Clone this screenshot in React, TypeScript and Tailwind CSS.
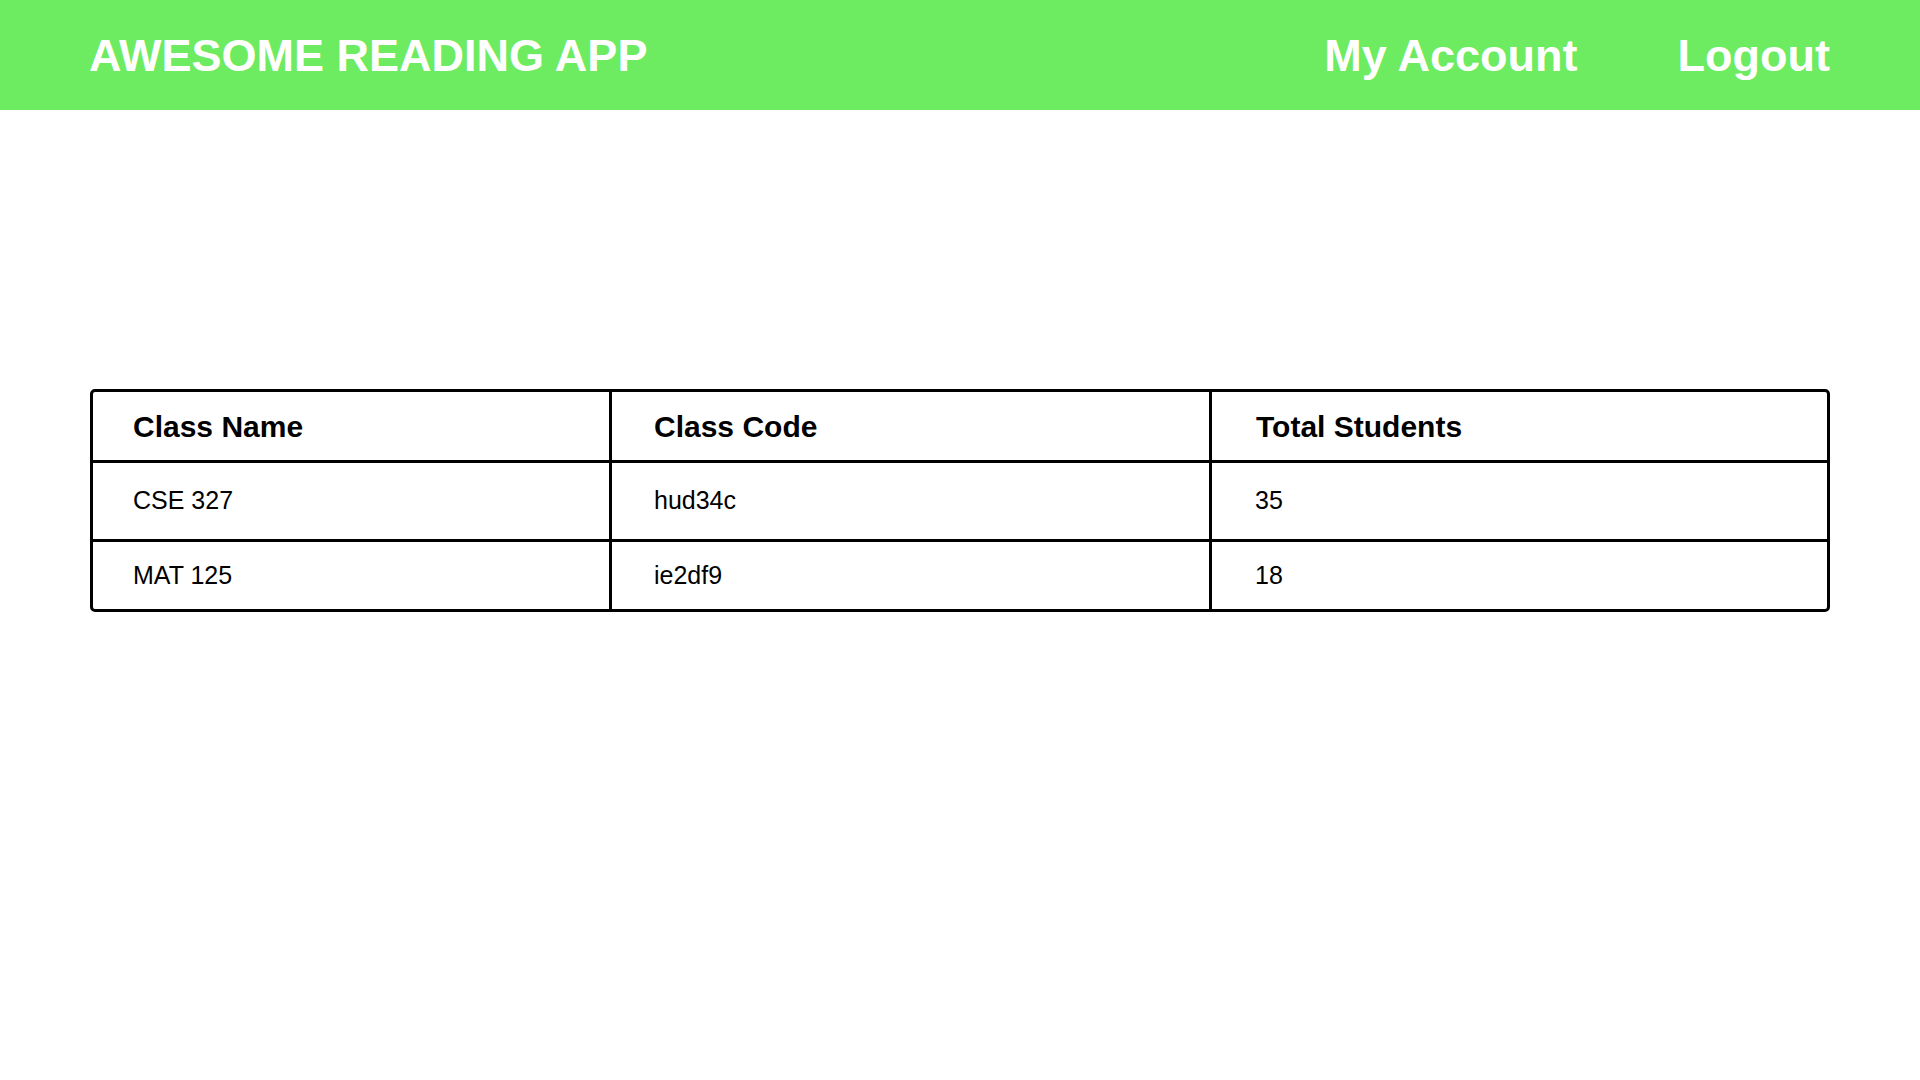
const classes = [
  { name: "CSE 327", code: "hud34c", total: 35, h: "h-[79px]" },
  { name: "MAT 125", code: "ie2df9", total: 18, h: "h-[67px]" },
];

export default function App() {
  return (
    <div className="min-h-screen bg-white font-['Liberation_Sans',Arial,sans-serif] text-black">
      <header className="flex h-[110px] items-center justify-between bg-[#6deb61] pl-[89px] pr-[90px] text-white">
        <h1 className="text-[45px] font-bold leading-none">AWESOME READING APP</h1>
        <nav className="flex items-center gap-[100px] text-[45px] font-bold leading-none">
          <a href="#">My Account</a>
          <a href="#">Logout</a>
        </nav>
      </header>

      <main className="pl-[90px] pr-[90px] pt-[279px]">
        <div className="rounded-[5px] border-[3px] border-black">
          <div className="grid h-[71px] grid-cols-[519px_600px_1fr] border-b-[3px] border-black text-[30px] font-bold">
            <div className="flex items-center border-r-[3px] border-black pl-[40px]">Class Name</div>
            <div className="flex items-center border-r-[3px] border-black pl-[42px]">Class Code</div>
            <div className="flex items-center pl-[44px]">Total Students</div>
          </div>
          {classes.map((c, i) => (
            <div
              key={c.code}
              className={`grid grid-cols-[519px_600px_1fr] text-[25px] ${c.h} ${
                i < classes.length - 1 ? "border-b-[3px] border-black" : ""
              }`}
            >
              <div className="flex items-center border-r-[3px] border-black pl-[40px]">{c.name}</div>
              <div className="flex items-center border-r-[3px] border-black pl-[42px]">{c.code}</div>
              <div className="flex items-center pl-[43px]">{c.total}</div>
            </div>
          ))}
        </div>
      </main>
    </div>
  );
}
